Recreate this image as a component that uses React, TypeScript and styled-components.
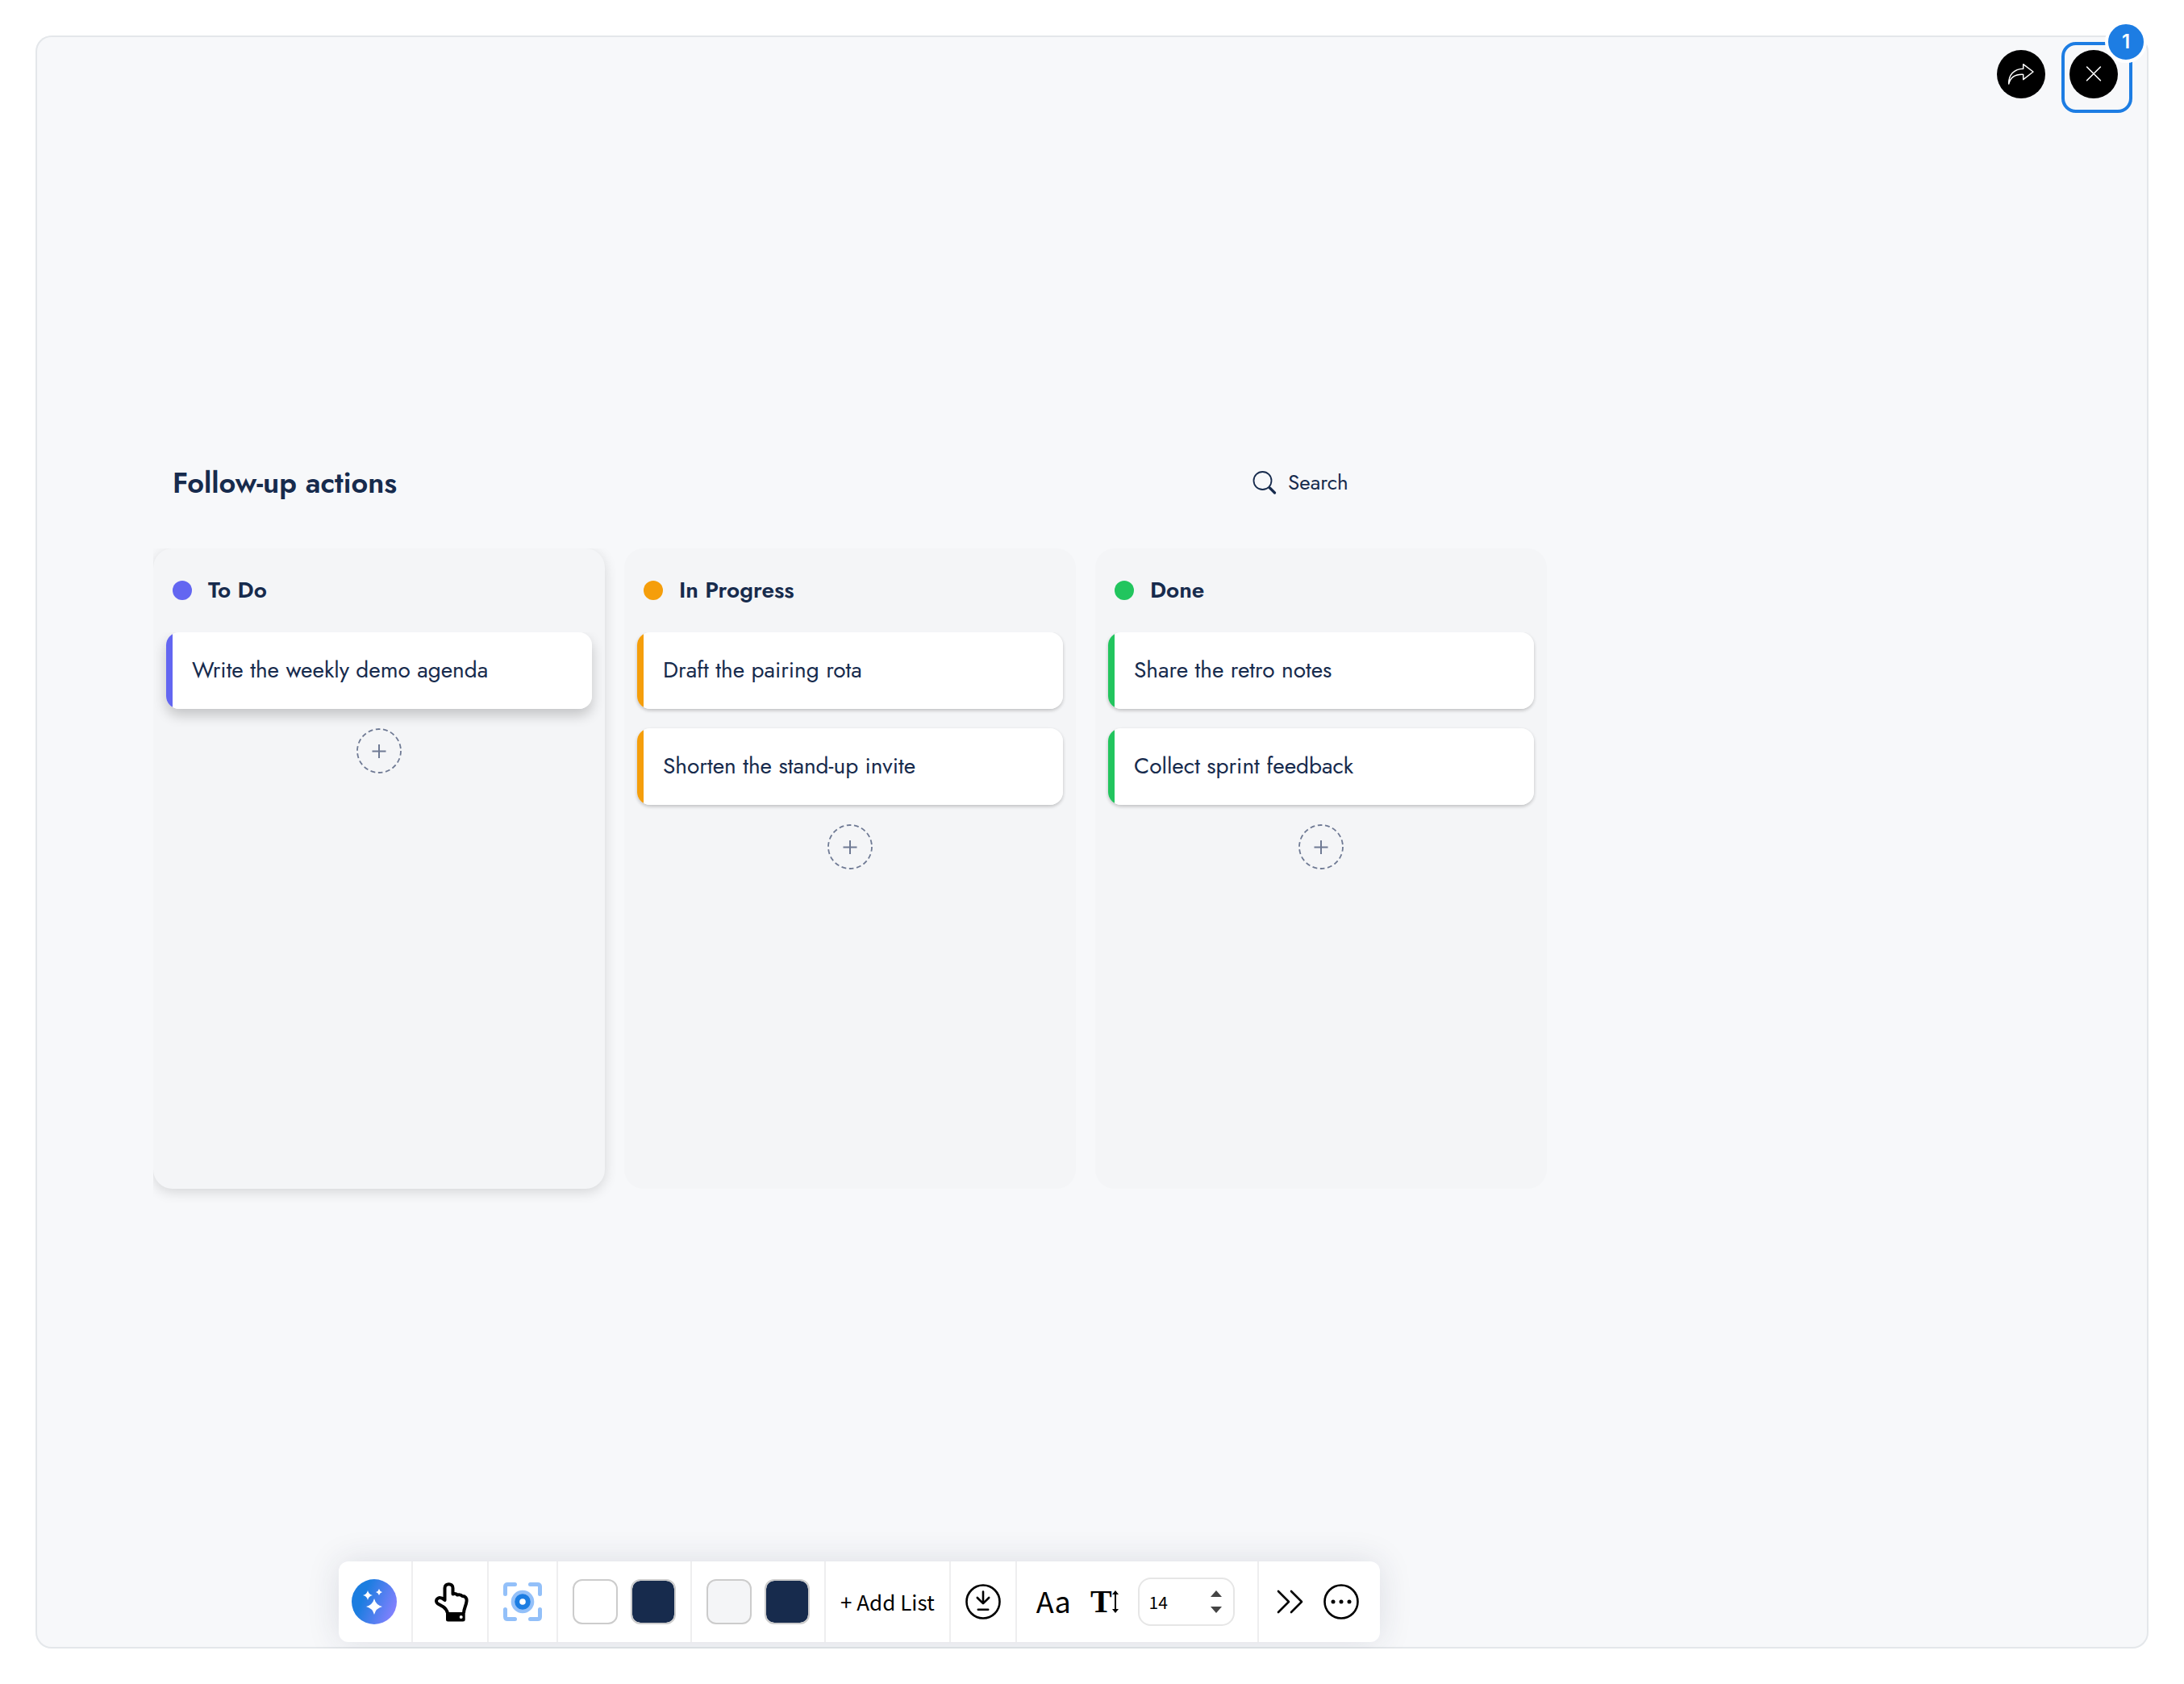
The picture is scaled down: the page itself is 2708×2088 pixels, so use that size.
import React from "react";
import styled, { createGlobalStyle } from "styled-components";

const INK = "#172b4d";
const BLUE = "#1d7de3";
const BOARD_FONT = `Jost, Lato, sans-serif`;
const TOOL_FONT = `"Noto Sans CJK SC", "Noto Sans", sans-serif`;

const GlobalStyle = createGlobalStyle`
  *, *::before, *::after { box-sizing: border-box; }
  body { margin: 0; background: #fff; color: ${INK}; font-family: ${BOARD_FONT}; }
  button, input { font: inherit; color: inherit; }
  button { padding: 0; border: 0; background: none; cursor: pointer; }
  h1, h2, p, ul { margin: 0; padding: 0; }
  svg { display: block; }
`;

const Page = styled.div`
  display: grid;
  min-height: 100vh;
  padding: 44px;
`;

const Canvas = styled.main`
  grid-area: 1 / 1;
  display: flex;
  flex-direction: column;
  justify-content: space-between;
  overflow: hidden;
  padding: 516px 16px 8px 146px;
  border-radius: 20px;
  background: #f7f8fa;
  box-shadow: inset 0 0 0 2px #e4e7ea;
`;

const TopActions = styled.div`
  grid-area: 1 / 1;
  justify-self: end;
  align-self: start;
  z-index: 1;
  display: flex;
  gap: 20px;
  padding: 8px 20px 0 0;
`;

const RoundButton = styled.button`
  width: 60px;
  height: 60px;
  border-radius: 50%;
  background: #000;
`;

const ShareSlot = styled.div`
  padding-top: 10px;
`;

const Highlight = styled.div`
  position: relative;
  width: 88px;
  height: 88px;
  padding: 6px;
  border: 4px solid ${BLUE};
  border-radius: 18px;
`;

const Badge = styled.span`
  position: absolute;
  top: -30px;
  right: -22px;
  width: 52px;
  height: 52px;
  border: 4px solid #fff;
  border-radius: 50%;
  background: ${BLUE};
  color: #fff;
  font: 600 24px/44px Inter, sans-serif;
  text-align: center;
`;

const Board = styled.section`
  display: flex;
  flex-direction: column;
  gap: 44px;
  max-width: 1728px;
`;

const BoardHeader = styled.header`
  display: flex;
  align-items: center;
  justify-content: space-between;
  height: 76px;
  padding: 0 24px;
`;

const BoardTitle = styled.h1`
  font-size: 36px;
  line-height: 48px;
  font-weight: 600;
`;

const SearchBox = styled.label`
  display: flex;
  align-items: center;
  gap: 14px;
  width: 341px;
`;

const SearchInput = styled.input`
  flex: 1;
  min-width: 0;
  padding: 0;
  border: 0;
  outline: 0;
  background: none;
  font-size: 26px;
  line-height: 36px;
  &::placeholder { color: ${INK}; opacity: 1; }
`;

const Columns = styled.div`
  display: grid;
  grid-template-columns: repeat(3, minmax(0, 1fr));
  gap: 24px;
  overflow: hidden;
  padding-bottom: 32px;
`;

const Column = styled.section<{ $raised?: boolean }>`
  min-height: 794px;
  border-radius: 24px;
  background: #f4f5f7;
  box-shadow: ${(p) => (p.$raised ? "0 4px 16px rgba(0, 0, 0, 0.14)" : "none")};
`;

const ColumnHead = styled.div`
  display: flex;
  align-items: center;
  gap: 20px;
  height: 104px;
  padding: 0 24px;
`;

const Dot = styled.span<{ $color: string }>`
  width: 24px;
  height: 24px;
  border-radius: 50%;
  background: ${(p) => p.$color};
`;

const ColumnTitle = styled.h2`
  font-size: 28px;
  line-height: 40px;
  font-weight: 600;
`;

const CardList = styled.ul`
  display: flex;
  flex-direction: column;
  align-items: center;
  gap: 24px;
  overflow: hidden;
  padding: 0 16px 24px;
  list-style: none;
`;

const Card = styled.li<{ $color: string; $raised?: boolean }>`
  align-self: stretch;
  padding: 27px 24px 28px 32px;
  border-radius: 16px;
  background: linear-gradient(to right, ${(p) => p.$color} 8px, #fff 8px);
  font-size: 28px;
  line-height: 40px;
  box-shadow: ${(p) =>
    p.$raised ? "0 8px 16px rgba(0, 0, 0, 0.2)" : "0 2px 4px rgba(0, 0, 0, 0.22)"};
`;

const AddCard = styled.button`
  width: 56px;
  height: 56px;
`;

const Toolbar = styled.div`
  display: flex;
  align-self: flex-start;
  height: 100px;
  margin-left: 230px;
  border-radius: 12px;
  background: #fff;
  box-shadow: 0 0 40px rgba(40, 45, 80, 0.13);
  color: #000;
  font-family: ${TOOL_FONT};
`;

const Group = styled.div<{ $gap?: number; $pad?: string }>`
  display: flex;
  align-items: center;
  gap: ${(p) => p.$gap ?? 0}px;
  padding: ${(p) => p.$pad ?? "0 18px"};
  & + & { border-left: 2px solid #eeeeef; }
`;

const Swatch = styled.button<{ $color: string }>`
  width: 56px;
  height: 56px;
  border: 2px solid #ccc;
  border-radius: 12px;
  background: ${(p) => p.$color};
  background-clip: padding-box;
`;

const AddList = styled.button`
  font-size: 26px;
  line-height: 40px;
  white-space: nowrap;
`;

const FontButton = styled.button`
  padding-bottom: 4px;
  font-size: 36px;
  line-height: 48px;
`;

const SizeButton = styled.button`
  display: flex;
  align-items: center;
  font: 700 40px/48px "Liberation Serif", serif;
`;

const NumberField = styled.label`
  display: flex;
  align-items: center;
  width: 120px;
  height: 60px;
  padding: 0 14px 0 12px;
  border: 2px solid #e6e6e6;
  border-radius: 16px;
`;

const NumberInput = styled.input`
  flex: 1;
  min-width: 0;
  padding: 0;
  border: 0;
  outline: 0;
  background: none;
  font-size: 21px;
  line-height: 32px;
  appearance: textfield;
  &::-webkit-inner-spin-button { display: none; }
`;

const Stepper = styled.span`
  display: flex;
  flex-direction: column;
  gap: 12px;
`;

const columns = [
  { title: "To Do", color: "#6366f1", raised: true, cards: ["Write the weekly demo agenda"] },
  { title: "In Progress", color: "#f59e0b", raised: false, cards: ["Draft the pairing rota", "Shorten the stand-up invite"] },
  { title: "Done", color: "#22c55e", raised: false, cards: ["Share the retro notes", "Collect sprint feedback"] },
];

const ShareIcon = () => (
  <svg width="60" height="60" fill="none" stroke="#fff" strokeWidth="1.5" strokeLinejoin="round">
    <path d="M14.7 42C14.5 31 21 23.5 32.7 23.3V17.7L45 27 32.7 36.6V30.4C23.500 30 17 33 14.700 42Z" />
  </svg>
);

const CloseIcon = () => (
  <svg width="60" height="60" stroke="#fff" strokeWidth="1.6" strokeLinecap="round">
    <path d="M21.600 21 38.400 37.800M38.400 21 21.600 37.800" />
  </svg>
);

const SearchIcon = () => (
  <svg width="30" height="30" fill="none" stroke={INK} strokeLinecap="round">
    <circle cx="12.500" cy="13" r="11" strokeWidth="1.800" />
    <path d="M21.500 22 27.500 28" strokeWidth="3.200" />
  </svg>
);

const PlusIcon = () => (
  <svg width="56" height="56" fill="none" stroke="#6f7a94">
    <circle cx="28" cy="28" r="27" strokeWidth="1.800" strokeDasharray="5.800 3.620" />
    <path d="M28 20V37M19.500 28.500H36.500" strokeWidth="2" />
  </svg>
);

const SparkleIcon = () => (
  <svg width="56" height="56">
    <defs>
      <linearGradient id="spark" x1="0" y1="0.3" x2="1" y2="0.7">
        <stop offset="0.25" stopColor="#1b7de0" />
        <stop offset="1" stopColor="#8881ff" />
      </linearGradient>
    </defs>
    <circle cx="28" cy="28" r="28" fill="url(#spark)" />
    <g fill="#fff">
      <path d="M28 24Q30 32 38 34 30 36 28 44 26 36 18 34 26 32 28 24Z" />
      <path d="M20 14Q21 18.800 26 20 21 21.200 20 26 19 21.200 14 20 19 18.800 20 14Z" />
      <path d="M34 12Q34.800 15.200 38 16 34.800 16.800 34 20 33.200 16.800 30 16 33.200 15.200 34 12Z" />
    </g>
  </svg>
);

const HandIcon = () => (
  <svg width="42" height="49" fill="none" stroke="#000" strokeWidth="4" strokeLinejoin="round">
    <path d="M16 38C15 34.500 13 32 10.500 30.200L4 26.500C1 24.500 1.500 21 4.500 19.500 7.500 18 10.500 20.500 12.500 22V7C12.500 .500 22.500 .500 22.500 7V14.500C24.500 13.800 26.500 14 28 15.500 30.500 14.800 33 15.500 34.200 17 38 17 40 19.500 39.500 23.500 39 29 36 32.500 36 38" />
    <path
      fill="#000"
      stroke="none"
      fillRule="evenodd"
      d="M14 37H37.700V46Q37.700 48.500 35 48.500H16.500Q14 48.500 14 46ZM32.700 41A2 2 0 1 0 32.700 45 2 2 0 1 0 32.700 41Z"
    />
  </svg>
);

const FocusIcon = () => (
  <svg width="48" height="48" fill="none">
    <path
      d="M2.500 14.500V5.500Q2.500 2.500 5.500 2.500H14.500M33.500 2.500H42.500Q45.500 2.500 45.500 5.500V14.500M45.500 33.500V42.500Q45.500 45.500 42.500 45.500H33.500M14.500 45.500H5.500Q2.500 45.500 2.500 42.500V33.500"
      stroke="#93c0f9"
      strokeWidth="5"
      strokeLinecap="round"
    />
    <circle cx="24" cy="24" r="14.300" fill="#93c0f9" />
    <circle cx="24" cy="24" r="9.800" fill="#1c7de2" />
    <circle cx="24" cy="24" r="3.800" fill="#fff" />
  </svg>
);

const DownloadIcon = () => (
  <svg width="44" height="44" fill="none" stroke="#000" strokeWidth="2.600" strokeLinecap="round" strokeLinejoin="round">
    <circle cx="22" cy="22" r="20.500" />
    <path d="M22 9.500V24M14.800 17 22 24.200 29.200 17M15.800 31.700H28.200" />
  </svg>
);

const HeightIcon = () => (
  <svg width="8" height="28" fill="#000">
    <path d="M4 0 8 5H5V23H8L4 28 0 23H3V5H0Z" />
  </svg>
);

const MoreToolsIcon = () => (
  <svg width="34" height="30" fill="none" stroke="#000" strokeWidth="2.600" strokeLinecap="round" strokeLinejoin="round">
    <path d="M2 2 15 15 2 28M18 2 31 15 18 28" />
  </svg>
);

const EllipsisIcon = () => (
  <svg width="44" height="44">
    <circle cx="22" cy="22" r="20.500" fill="none" stroke="#000" strokeWidth="2.600" />
    <circle cx="12" cy="22" r="2.500" />
    <circle cx="22" cy="22" r="2.500" />
    <circle cx="32" cy="22" r="2.500" />
  </svg>
);

const Arrow = ({ down = false }: { down?: boolean }) => (
  <svg width="14" height="8" fill="#444">
    <path d={down ? "M0 0H14L7 8Z" : "M0 8H14L7 0Z"} />
  </svg>
);

export default function App() {
  return (
    <>
      <GlobalStyle />
      <Page>
        <Canvas>
          <Board>
            <BoardHeader>
              <BoardTitle>Follow-up actions</BoardTitle>
              <SearchBox>
                <SearchIcon />
                <SearchInput type="search" placeholder="Search" aria-label="Search" />
              </SearchBox>
            </BoardHeader>
            <Columns>
              {columns.map((col) => (
                <Column key={col.title} $raised={col.raised}>
                  <ColumnHead>
                    <Dot $color={col.color} />
                    <ColumnTitle>{col.title}</ColumnTitle>
                  </ColumnHead>
                  <CardList>
                    {col.cards.map((card) => (
                      <Card key={card} $color={col.color} $raised={col.raised}>
                        {card}
                      </Card>
                    ))}
                    <li>
                      <AddCard aria-label={`Add card to ${col.title}`}>
                        <PlusIcon />
                      </AddCard>
                    </li>
                  </CardList>
                </Column>
              ))}
            </Columns>
          </Board>

          <Toolbar role="toolbar" aria-label="Board tools">
            <Group $pad="0 18px 0 16px">
              <button aria-label="AI assistant"><SparkleIcon /></button>
            </Group>
            <Group $pad="0 23px 0 27px">
              <button aria-label="Pointer"><HandIcon /></button>
            </Group>
            <Group>
              <button aria-label="Focus"><FocusIcon /></button>
            </Group>
            <Group $gap={16}>
              <Swatch $color="#fff" aria-label="Card colour" />
              <Swatch $color={INK} aria-label="Card text colour" />
            </Group>
            <Group $gap={16}>
              <Swatch $color="#f4f5f7" aria-label="List colour" />
              <Swatch $color={INK} aria-label="List text colour" />
            </Group>
            <Group>
              <AddList>+ Add List</AddList>
            </Group>
            <Group>
              <button aria-label="Download"><DownloadIcon /></button>
            </Group>
            <Group $gap={24} $pad="0 28px 0 24px">
              <FontButton aria-label="Font">Aa</FontButton>
              <SizeButton aria-label="Text size">
                T
                <HeightIcon />
              </SizeButton>
              <NumberField>
                <NumberInput type="number" defaultValue={14} aria-label="Font size" />
                <Stepper>
                  <Arrow />
                  <Arrow down />
                </Stepper>
              </NumberField>
            </Group>
            <Group $gap={24} $pad="0 26px 0 22px">
              <button aria-label="More tools"><MoreToolsIcon /></button>
              <button aria-label="More options"><EllipsisIcon /></button>
            </Group>
          </Toolbar>
        </Canvas>

        <TopActions>
          <ShareSlot>
            <RoundButton aria-label="Share"><ShareIcon /></RoundButton>
          </ShareSlot>
          <Highlight>
            <RoundButton aria-label="Close"><CloseIcon /></RoundButton>
            <Badge>1</Badge>
          </Highlight>
        </TopActions>
      </Page>
    </>
  );
}
